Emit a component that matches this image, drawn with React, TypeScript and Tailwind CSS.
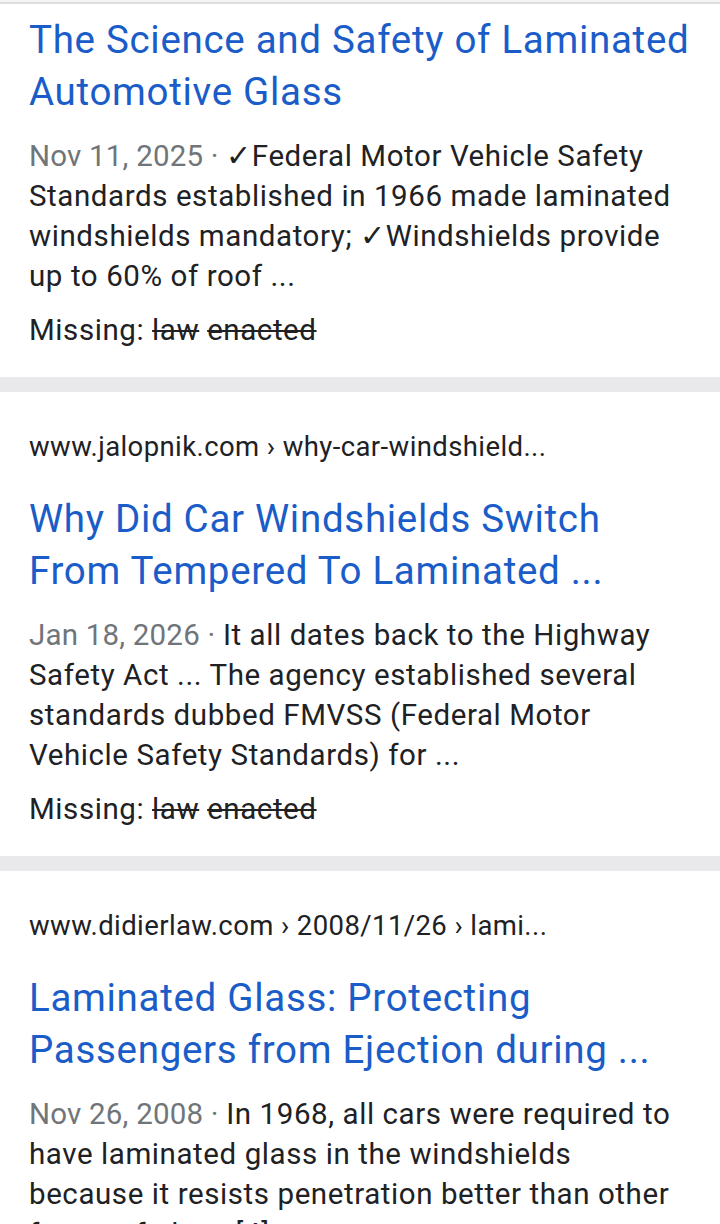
import React from "react";

const font = { fontFamily: "Roboto, 'Noto Sans', Arial, sans-serif" };

type R = {
  url?: string;
  title: string[];
  date: string;
  lines: string[];
  missing?: boolean;
};

const results: R[] = [
  {
    title: ["The Science and Safety of Laminated", "Automotive Glass"],
    date: "Nov 11, 2025",
    lines: [
      "✓Federal Motor Vehicle Safety",
      "Standards established in 1966 made laminated",
      "windshields mandatory; ✓Windshields provide",
      "up to 60% of roof ...",
    ],
    missing: true,
  },
  {
    url: "www.jalopnik.com › why-car-windshield...",
    title: ["Why Did Car Windshields Switch", "From Tempered To Laminated ..."],
    date: "Jan 18, 2026",
    lines: [
      "It all dates back to the Highway",
      "Safety Act ... The agency established several",
      "standards dubbed FMVSS (Federal Motor",
      "Vehicle Safety Standards) for ...",
    ],
    missing: true,
  },
  {
    url: "www.didierlaw.com › 2008/11/26 › lami...",
    title: ["Laminated Glass: Protecting", "Passengers from Ejection during ..."],
    date: "Nov 26, 2008",
    lines: [
      "In 1968, all cars were required to",
      "have laminated glass in the windshields",
      "because it resists penetration better than other",
      "forms of glass.[4]",
    ],
  },
];

function Result({ r }: { r: R }) {
  return (
    <div className="bg-white pl-[29px]">
      {r.url && (
        <div className="pt-[37px] whitespace-nowrap text-[27.5px] leading-[36px] tracking-[0.4px] text-[#202124]">
          {r.url}
        </div>
      )}
      <div
        className={`${r.url ? "mt-[28px]" : "pt-[10px]"} whitespace-nowrap text-[38.5px] leading-[52px] tracking-[0.7px] text-[#1a5cc8]`}
      >
        {r.title.map((t, i) => (
          <div key={i}>{t}</div>
        ))}
      </div>
      <div className="mt-[18px] whitespace-nowrap text-[29.5px] leading-[40px] tracking-[0.58px] text-[#202124]">
        {r.lines.map((l, i) => (
          <div key={i}>
            {i === 0 && (
              <span className="text-[#70757a] tracking-[0.2px]">{r.date} · </span>
            )}
            {l}
          </div>
        ))}
      </div>
      {r.missing && (
        <div className="mt-[14px] whitespace-nowrap text-[29.5px] leading-[40px] tracking-[0.58px] text-[#202124]">
          Missing: <span className="line-through">law</span>{" "}
          <span className="line-through">enacted</span>
        </div>
      )}
    </div>
  );
}

export default function App() {
  return (
    <div className="w-[720px] h-[1224px] overflow-hidden bg-white" style={font}>
      <div className="h-[2px] bg-[#f3f3f3]" />
      <div className="h-[2px] bg-[#dedede]" />
      <Result r={results[0]} />
      <div className="mt-[27px] h-[15px] bg-[#e9e9eb]" />
      <Result r={results[1]} />
      <div className="mt-[27px] h-[15px] bg-[#e9e9eb]" />
      <Result r={results[2]} />
    </div>
  );
}
